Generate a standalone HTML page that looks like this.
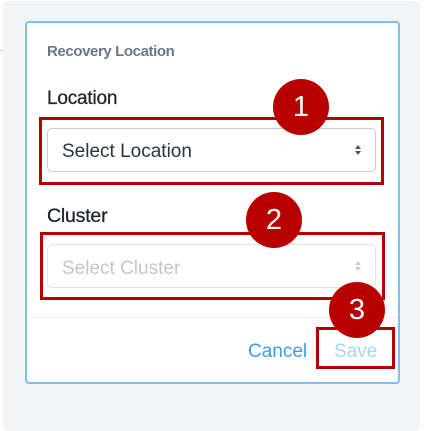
<!DOCTYPE html>
<html><head><style>
*{margin:0;padding:0;box-sizing:border-box}
body{width:425px;height:423px;background:#fff;position:relative;overflow:hidden;font-family:"Liberation Sans",sans-serif}
.a{position:absolute;white-space:nowrap}
.panel{left:3px;top:1px;width:417px;height:430px;background:#f2f3f5;border-radius:6px}
.card{left:25px;top:21px;width:375px;height:363px;background:#fff;border:2px solid #7cc0f0;border-radius:4px}
.sel{border:1px solid #c9ced6;border-radius:5px;background:#fff}
.red{border:3px solid #b30000}
.c{width:56px;height:56px;border-radius:50%;background:#b80000;color:#fff;font-size:29px;text-align:center;line-height:56px}
.arr{width:0;height:0;border-left:3px solid transparent;border-right:3px solid transparent}
</style></head><body>
<div class="a panel"></div>
<div class="a" style="left:0;top:50px;width:3px;height:1px;background:#ccc"></div>
<div class="a card"></div>
<div class="a" style="left:47px;top:43px;font-size:15px;font-weight:bold;color:#6a7888;letter-spacing:-0.4px">Recovery Location</div>
<div class="a" style="left:47px;top:88px;font-size:19px;color:#1e252d;letter-spacing:-0.2px;-webkit-text-stroke:0.3px #1e252d">Location</div>
<div class="a sel" style="left:47px;top:128px;width:329px;height:44px"></div>
<div class="a" style="left:62px;top:141px;font-size:19px;color:#2b3440">Select Location</div>
<div class="a arr" style="left:355px;top:145px;border-bottom:4px solid #555"></div>
<div class="a arr" style="left:355px;top:151px;border-top:4px solid #555"></div>
<div class="a red" style="left:39px;top:117px;width:345px;height:68px"></div>
<div class="a" style="left:47px;top:205px;font-size:19.5px;color:#1e252d;letter-spacing:-0.2px;-webkit-text-stroke:0.3px #1e252d">Cluster</div>
<div class="a sel" style="left:47px;top:244px;width:329px;height:44px;border-color:#e1e4e8"></div>
<div class="a" style="left:62px;top:258px;font-size:19px;color:#c2c7ce">Select Cluster</div>
<div class="a arr" style="left:355px;top:261px;border-bottom:4px solid #ccc"></div>
<div class="a arr" style="left:355px;top:267px;border-top:4px solid #ccc"></div>
<div class="a red" style="left:40px;top:232px;width:345px;height:68px"></div>
<div class="a" style="left:27px;top:317px;width:371px;height:1px;background:#eceef0"></div>
<div class="a" style="left:248px;top:341px;font-size:19px;color:#3d9be8">Cancel</div>
<div class="a" style="left:334px;top:341px;font-size:19px;color:#a9d5f7">Save</div>
<div class="a red" style="left:316px;top:327px;width:79px;height:42px"></div>
<div class="a c" style="left:273px;top:79px">1</div>
<div class="a c" style="left:246px;top:192px">2</div>
<div class="a c" style="left:329px;top:282px">3</div>
</body></html>
